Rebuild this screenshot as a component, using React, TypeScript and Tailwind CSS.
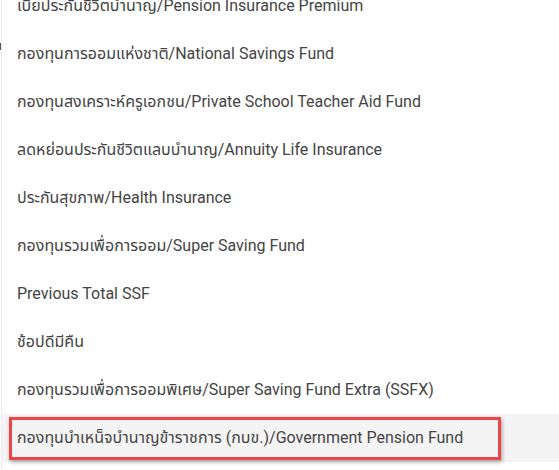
import React from "react";

const items = [
  "เบี้ยประกันชีวิตบำนาญ/Pension Insurance Premium",
  "กองทุนการออมแห่งชาติ/National Savings Fund",
  "กองทุนสงเคราะห์ครูเอกชน/Private School Teacher Aid Fund",
  "ลดหย่อนประกันชีวิตแลบบำนาญ/Annuity Life Insurance",
  "ประกันสุขภาพ/Health Insurance",
  "กองทุนรวมเพื่อการออม/Super Saving Fund",
  "Previous Total SSF",
  "ช้อปดีมีคืน",
  "กองทุนรวมเพื่อการออมพิเศษ/Super Saving Fund Extra (SSFX)",
];

export default function App() {
  return (
    <div
      className="relative w-[559px] h-[470px] overflow-hidden bg-white"
      style={{ fontFamily: 'Roboto, "Noto Sans Thai", "Noto Sans", sans-serif' }}
    >
      <div className="absolute left-0 top-[43px] w-[1px] h-[7px] bg-[#555]" />
      <div className="ml-[1px] h-full border-l border-t border-[#ececec] mt-[-1px]">
        <div className="mt-[-18px] flex flex-col">
          {items.map((t) => (
            <div
              key={t}
              className="h-12 flex items-center px-[15px] text-[16px] text-[#444] whitespace-nowrap"
            >
              {t}
            </div>
          ))}
          <div className="relative h-12 flex items-center px-[15px] text-[16px] text-[#444] whitespace-nowrap bg-[#f4f4f4]">
            กองทุนบำเหน็จบำนาญข้าราชการ (กบข.)/Government Pension Fund
            <div className="absolute left-[7px] top-[3px] w-[492px] h-[43px] border-[3px] border-[#ee4646] shadow-[1px_2px_4px_rgba(0,0,0,0.35)]" />
          </div>
        </div>
      </div>
    </div>
  );
}
